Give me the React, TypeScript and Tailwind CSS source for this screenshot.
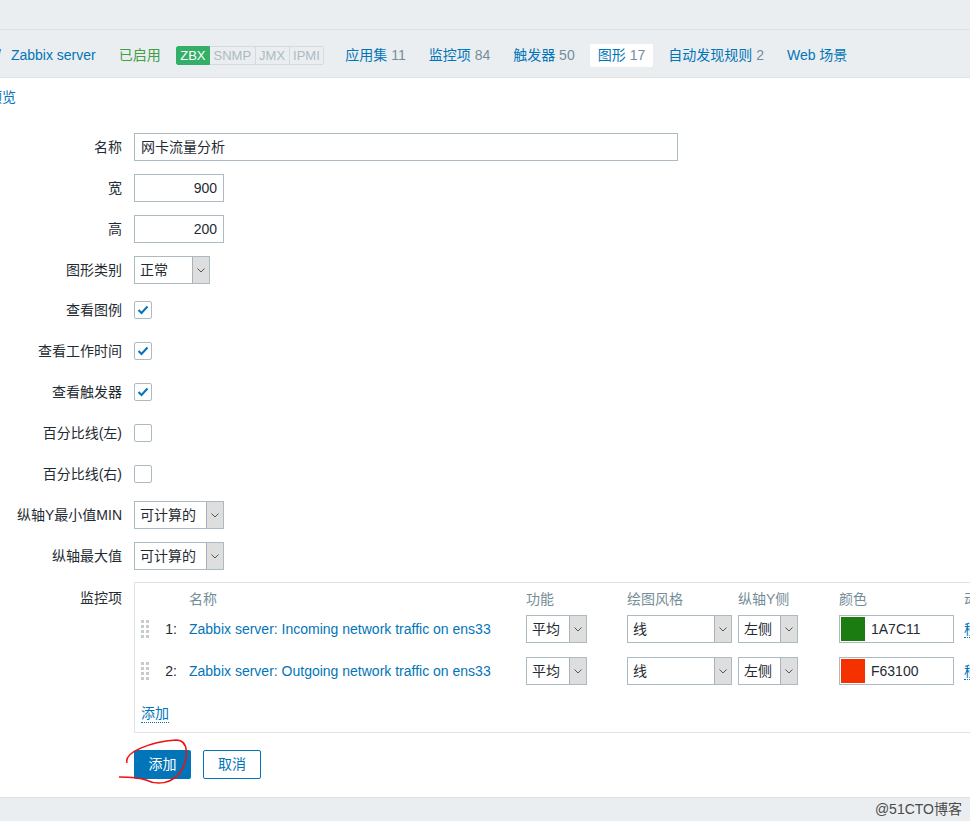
import React from "react";

const Chevron = () => (
  <svg width="8" height="5" viewBox="0 0 8 5" fill="none">
    <path d="M0.5 0.5 L4 4 L7.5 0.5" stroke="#555" strokeWidth="1" />
  </svg>
);

function Select({ value, w }: { value: string; w: string }) {
  return (
    <div className={`flex shrink-0 h-[28px] ${w} border border-[#acbbc2] bg-white`}>
      <div className="flex-1 flex items-center pl-[5px] text-[14px] text-[#1f2c33] whitespace-nowrap overflow-hidden">
        {value}
      </div>
      <div className="w-[17px] shrink-0 h-full bg-[#dedede] border-l border-[#a9b2b6] flex items-center justify-center">
        <Chevron />
      </div>
    </div>
  );
}

function Check({ on }: { on: boolean }) {
  return (
    <div className="w-[18px] h-[18px] border border-[#acbbc2] rounded-[2px] bg-white flex items-center justify-center">
      {on && (
        <svg width="12" height="10" viewBox="0 0 12 10" fill="none">
          <path d="M1.5 5 L4.5 8 L10.5 1.5" stroke="#0275b8" strokeWidth="2" />
        </svg>
      )}
    </div>
  );
}

function Row({ label, children, extra = "" }: { label: string; children: React.ReactNode; extra?: string }) {
  return (
    <div className={`flex items-center h-[28px] ${extra}`}>
      <div className="w-[122px] shrink-0 text-right text-[14px] text-[#1f2c33] whitespace-nowrap">{label}</div>
      <div className="ml-[12px] flex items-center">{children}</div>
    </div>
  );
}

function Handle() {
  return (
    <div className="grid grid-cols-2 gap-x-[2px] gap-y-[2px] w-[8px]">
      {Array.from({ length: 8 }).map((_, i) => (
        <div key={i} className="w-[3px] h-[3px] bg-[#c5ccd0]" />
      ))}
    </div>
  );
}

function ItemRow({ n, name, color, hex }: { n: string; name: string; color: string; hex: string }) {
  return (
    <div className="flex items-center h-[28px]">
      <div className="w-[12px] shrink-0 flex justify-start">
        <Handle />
      </div>
      <div className="w-[24px] shrink-0 text-right text-[14px] text-[#1f2c33]">{n}</div>
      <div className="w-[349px] shrink-0 pl-[12px] text-[14px] text-[#0275b8] whitespace-nowrap">{name}</div>
      <div className="w-[101px] shrink-0">
        <Select value="平均" w="w-[61px]" />
      </div>
      <div className="w-[111px] shrink-0">
        <Select value="线" w="w-[105px]" />
      </div>
      <div className="w-[101px] shrink-0">
        <Select value="左侧" w="w-[60px]" />
      </div>
      <div className="w-[125px] shrink-0">
        <div className="flex items-center w-[115px] h-[28px] border border-[#acbbc2] bg-white pl-[1px]">
          <div className="w-[24px] h-[24px]" style={{ backgroundColor: color }} />
          <span className="ml-[6px] text-[14px] text-[#1f2c33]">{hex}</span>
        </div>
      </div>
      <div className="shrink-0 text-[14px] text-[#0275b8] border-b border-dotted border-[#0275b8] leading-[16px] whitespace-nowrap">移除</div>
    </div>
  );
}

export default function App() {
  return (
    <div className="relative w-[970px] h-[821px] overflow-hidden bg-white font-['Liberation_Sans','Noto_Sans_CJK_SC',sans-serif] flex flex-col">
      <div className="h-[30px] bg-[#ebeef0] border-b border-[#dde2e5] shrink-0" />
      <div className="h-[48px] pt-[4px] bg-[#ebeef0] border-b border-[#dde2e5] flex items-center text-[14px] shrink-0 whitespace-nowrap">
        <span className="ml-[-3px] text-[#0275b8]">/</span>
        <span className="ml-[10px] text-[#0275b8]">Zabbix server</span>
        <span className="ml-[23px] text-[#429e47]">已启用</span>
        <div className="ml-[15px] flex h-[19px] text-[13px] leading-[17px] rounded-[2px] overflow-hidden">
          <span className="bg-[#34af67] text-white px-[3.5px] border border-[#34af67] rounded-l-[2px]">ZBX</span>
          <span className="bg-[#ebeef0] text-[#acbbc2] px-[3.5px] border border-[#d4dadd] border-l-0">SNMP</span>
          <span className="bg-[#ebeef0] text-[#acbbc2] px-[3.5px] border border-[#d4dadd] border-l-0">JMX</span>
          <span className="bg-[#ebeef0] text-[#acbbc2] px-[3.5px] border border-[#d4dadd] border-l-0 rounded-r-[2px]">IPMI</span>
        </div>
        <span className="ml-[21px] text-[#0275b8]">应用集 <span className="text-[#768d99]">11</span></span>
        <span className="ml-[23px] text-[#0275b8]">监控项 <span className="text-[#768d99]">84</span></span>
        <span className="ml-[23px] text-[#0275b8]">触发器 <span className="text-[#768d99]">50</span></span>
        <span className="ml-[15px] px-[8px] h-[23px] flex items-center bg-white rounded-[2px] text-[#0275b8]">图形 <span className="ml-[4px] text-[#768d99]">17</span></span>
        <span className="ml-[15px] text-[#0275b8]">自动发现规则 <span className="text-[#768d99]">2</span></span>
        <span className="ml-[23px] text-[#0275b8]">Web 场景</span>
      </div>

      <div className="flex-1 bg-white">
        <div className="mt-[10px] ml-[-12px] text-[14px] text-[#0275b8] leading-[18px]">预览</div>

        <div className="mt-[27px] flex flex-col gap-[13px]">
          <Row label="名称">
            <div className="w-[544px] h-[28px] border border-[#acbbc2] flex items-center px-[6px] text-[14px] text-[#1f2c33]">网卡流量分析</div>
          </Row>
          <Row label="宽">
            <div className="w-[90px] h-[28px] border border-[#acbbc2] flex items-center justify-end px-[6px] text-[14px] text-[#1f2c33]">900</div>
          </Row>
          <Row label="高">
            <div className="w-[90px] h-[28px] border border-[#acbbc2] flex items-center justify-end px-[6px] text-[14px] text-[#1f2c33]">200</div>
          </Row>
          <Row label="图形类别">
            <Select value="正常" w="w-[76px]" />
          </Row>
          <Row label="查看图例" extra="mt-[-1px]"><Check on /></Row>
          <Row label="查看工作时间"><Check on /></Row>
          <Row label="查看触发器"><Check on /></Row>
          <Row label="百分比线(左)"><Check on={false} /></Row>
          <Row label="百分比线(右)"><Check on={false} /></Row>
          <Row label="纵轴Y最小值MIN">
            <Select value="可计算的" w="w-[90px]" />
          </Row>
          <Row label="纵轴最大值">
            <Select value="可计算的" w="w-[90px]" />
          </Row>
        </div>

        <div className="mt-[12px] flex">
          <div className="w-[122px] shrink-0 text-right text-[14px] text-[#1f2c33] pt-[6px]">监控项</div>
          <div className="ml-[12px] w-[900px] shrink-0 h-[151px] border border-[#dfe4e7] pl-[6px] pt-[8px]">
            <div className="flex h-[16px] text-[14px] text-[#768d99] leading-[16px] whitespace-nowrap">
              <div className="w-[12px] shrink-0" />
              <div className="w-[24px] shrink-0" />
              <div className="w-[349px] shrink-0 pl-[12px]">名称</div>
              <div className="w-[101px] shrink-0">功能</div>
              <div className="w-[111px] shrink-0">绘图风格</div>
              <div className="w-[101px] shrink-0">纵轴Y侧</div>
              <div className="w-[125px] shrink-0">颜色</div>
              <div className="shrink-0">动作</div>
            </div>
            <div className="mt-[8px] flex flex-col gap-[14px]">
              <ItemRow n="1:" name="Zabbix server: Incoming network traffic on ens33" color="#1A7C11" hex="1A7C11" />
              <ItemRow n="2:" name="Zabbix server: Outgoing network traffic on ens33" color="#F63100" hex="F63100" />
            </div>
            <div className="mt-[16px]">
              <span className="text-[14px] text-[#0275b8] border-b border-dotted border-[#0275b8] leading-[17px] inline-block">添加</span>
            </div>
          </div>
        </div>

        <div className="mt-[17px] ml-[134px] flex gap-[12px]">
          <div className="w-[57px] h-[29px] bg-[#0275b8] rounded-[2px] flex items-center justify-center text-[14px] text-white">添加</div>
          <div className="w-[58px] h-[29px] bg-white border border-[#0275b8] rounded-[2px] flex items-center justify-center text-[14px] text-[#0275b8]">取消</div>
        </div>
      </div>

      <div className="h-[24px] bg-[#ebeef0] border-t border-[#dde2e5] shrink-0 flex items-center justify-end pr-[8px]">
        <span className="text-[14px] text-[#4a4a4a]">@51CTO博客</span>
      </div>

      <svg className="absolute left-0 top-0 pointer-events-none" width="970" height="821">
        <path
          d="M 127 763 C 124 752, 150 742, 176 740 C 190 740, 188 760, 181 771 C 172 785, 156 785, 146 780 C 138 777, 128 777, 119 777"
          stroke="#ee1111"
          strokeWidth="1.5"
          fill="none"
        />
      </svg>
    </div>
  );
}
